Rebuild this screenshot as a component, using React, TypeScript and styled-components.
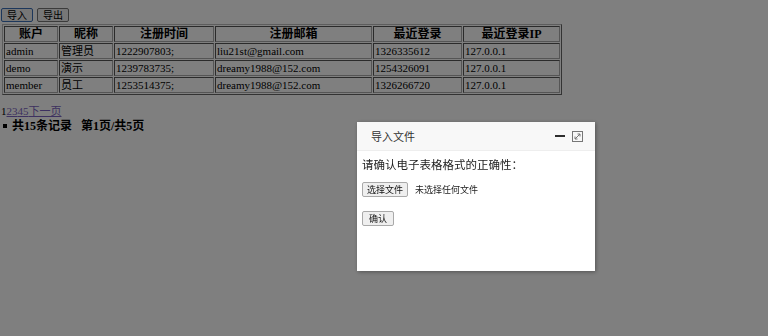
import styled, { createGlobalStyle } from 'styled-components';

const GlobalStyle = createGlobalStyle`
  body {
    margin: 0;
    background: #fff;
    font-family: "Liberation Serif", "Noto Sans CJK SC", serif;
    color: #000;
  }
`;

const Page = styled.div`
  padding: 8px 0 0 1px;
  height: 328px;
`;

const Toolbar = styled.div`
  display: flex;
  gap: 4px;
`;

const PlainButton = styled.button<{ $focused?: boolean }>`
  height: 14px;
  padding: 0 5px;
  font-family: "Noto Sans CJK SC", sans-serif;
  font-size: 10px;
  line-height: 12px;
  background: #efefef;
  border: 1px solid ${(p) => (p.$focused ? '#3b6fb6' : '#767676')};
  border-radius: 2px;
  color: #000;
`;

const UserTable = styled.table`
  margin: 2px 0 0 1px;
  box-sizing: border-box;
  width: 560px;
  table-layout: fixed;
  border: 1px outset #bbb;
  border-spacing: 1px;
`;

const HeadCell = styled.th<{ $w: number }>`
  width: ${(p) => p.$w}px;
  box-sizing: border-box;
  height: 16px;
  padding: 0;
  border: 1px inset #aaa;
  font-size: 12px;
  line-height: 14px;
  font-weight: bold;
  text-align: center;
`;

const Cell = styled.td`
  box-sizing: border-box;
  height: 16px;
  padding: 0 1px;
  border: 1px inset #aaa;
  font-size: 11px;
  line-height: 14px;
  white-space: nowrap;
  overflow: hidden;
`;

const Pager = styled.div`
  margin-top: 9px;
  font-size: 11px;
  line-height: 14px;
`;

const PageLink = styled.a`
  color: #7a62c0;
  text-decoration: underline;
`;

const Summary = styled.ul`
  margin: 1px 0 0;
  padding: 0;
  list-style: none;
  font-size: 12px;
  line-height: 14px;
  font-weight: bold;
`;

const SummaryItem = styled.li`
  display: flex;
  align-items: center;
  gap: 5px;

  &::before {
    content: '';
    display: block;
    width: 4px;
    height: 4px;
    margin-left: 2px;
    background: #000;
  }
`;

const Mask = styled.div`
  position: fixed;
  inset: 0;
  background: rgba(0, 0, 0, 0.5);
`;

const Dialog = styled.div`
  position: fixed;
  left: 357px;
  top: 122px;
  width: 238px;
  height: 149px;
  background: #fff;
  box-shadow: 1px 1px 4px rgba(0, 0, 0, 0.35);
  font-family: "Noto Sans CJK SC", sans-serif;
  color: #333;
`;

const DialogHeader = styled.div`
  height: 28px;
  display: flex;
  align-items: center;
  justify-content: space-between;
  padding: 0 12px 0 14px;
  background: #f8f8f8;
  border-bottom: 1px solid #eee;
  font-size: 11px;
`;

const HeaderTools = styled.div`
  display: flex;
  align-items: center;
  gap: 7px;
`;

const MinIcon = styled.span`
  display: block;
  width: 10px;
  height: 2px;
  background: #2e2e2e;
`;

const DialogBody = styled.div`
  padding: 6px 5px;
  display: flex;
  flex-direction: column;
  align-items: flex-start;
`;

const Notice = styled.div`
  font-size: 11.5px;
  line-height: 14px;
  color: #222;
`;

const FileRow = styled.div`
  margin-top: 11px;
  display: flex;
  align-items: center;
  gap: 7px;
  font-size: 9px;
  color: #222;
`;

const FormButton = styled.button`
  height: 15px;
  padding: 0 4px;
  font-family: "Noto Sans CJK SC", sans-serif;
  font-size: 9px;
  line-height: 12px;
  background: #efefef;
  border: 1px solid #a9a9a9;
  border-radius: 2px;
  color: #111;
`;

const ConfirmRow = styled.div`
  margin-top: 14px;
  display: flex;
`;

const ConfirmButton = styled(FormButton)`
  padding: 0 6px;
`;

const columns = [
  { title: '账户', w: 54 },
  { title: '昵称', w: 54 },
  { title: '注册时间', w: 100 },
  { title: '注册邮箱', w: 157 },
  { title: '最近登录', w: 89 },
  { title: '最近登录IP', w: 97 },
];

const users = [
  ['admin', '管理员', '1222907803;', 'liu21st@gmail.com', '1326335612', '127.0.0.1'],
  ['demo', '演示', '1239783735;', 'dreamy1988@152.com', '1254326091', '127.0.0.1'],
  ['member', '员工', '1253514375;', 'dreamy1988@152.com', '1326266720', '127.0.0.1'],
];

const MaxIcon = () => (
  <svg width="11" height="11" viewBox="0 0 11 11">
    <rect x="0.5" y="0.5" width="10" height="10" fill="none" stroke="#777" />
    <path d="M3 8 L8 3 M5.5 3 H8 V5.5 M3 5.5 V8 H5.5" fill="none" stroke="#777" />
  </svg>
);

const App = () => {
  return (
    <>
      <GlobalStyle />
      <Page>
        <Toolbar>
          <PlainButton $focused>导入</PlainButton>
          <PlainButton>导出</PlainButton>
        </Toolbar>
        <UserTable>
          <thead>
            <tr>
              {columns.map((c) => (
                <HeadCell key={c.title} $w={c.w}>
                  {c.title}
                </HeadCell>
              ))}
            </tr>
          </thead>
          <tbody>
            {users.map((u) => (
              <tr key={u[0]}>
                {u.map((v, i) => (
                  <Cell key={i}>{v}</Cell>
                ))}
              </tr>
            ))}
          </tbody>
        </UserTable>
        <Pager>
          1<PageLink href="#">2</PageLink>
          <PageLink href="#">3</PageLink>
          <PageLink href="#">4</PageLink>
          <PageLink href="#">5</PageLink>
          <PageLink href="#">下一页</PageLink>
        </Pager>
        <Summary>
          <SummaryItem>共15条记录&nbsp;&nbsp;&nbsp;第1页/共5页</SummaryItem>
        </Summary>
      </Page>
      <Mask />
      <Dialog>
        <DialogHeader>
          <span>导入文件</span>
          <HeaderTools>
            <MinIcon />
            <MaxIcon />
          </HeaderTools>
        </DialogHeader>
        <DialogBody>
          <Notice>请确认电子表格格式的正确性：</Notice>
          <FileRow>
            <FormButton>选择文件</FormButton>
            <span>未选择任何文件</span>
          </FileRow>
          <ConfirmRow>
            <ConfirmButton>确认</ConfirmButton>
          </ConfirmRow>
        </DialogBody>
      </Dialog>
    </>
  );
};

export default App;
